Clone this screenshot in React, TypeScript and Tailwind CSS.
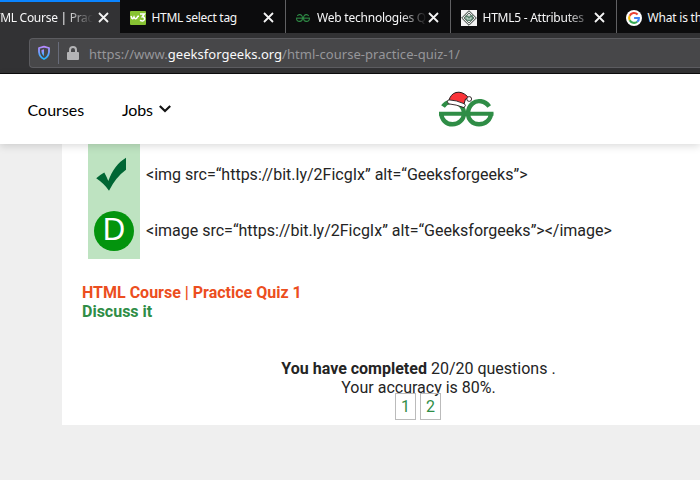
import React from "react";

const uiFont = "font-['Noto_Sans','Open_Sans',sans-serif]";

function CloseIcon() {
  return (
    <svg width="11" height="11" viewBox="0 0 11 11" className="block shrink-0" fill="none" stroke="#f4f4f4" strokeWidth="1.8">
      <path d="M1 1 L10 10 M10 1 L1 10" />
    </svg>
  );
}

function W3Icon() {
  return (
    <svg width="16" height="14" viewBox="0 0 16 14" className="block">
      <rect width="16" height="14" rx="1" fill="#87c232" />
      <path d="M1 5 L2 7.5 Q3 8.3 4 6 Q5 8.5 6.5 7.5 L8 5.2 H9" fill="none" stroke="#fff" strokeWidth="1.5" />
      <path d="M10 3 H14.3 L12.3 5.8 Q15 6 14.4 8.5 Q13.3 11 10 9.3" fill="none" stroke="#fff" strokeWidth="1.6" />
    </svg>
  );
}

function GfgMark({ width, height, color }: { width: number; height: number; color: string }) {
  return (
    <svg width={width} height={height} viewBox="0 0 55 28" preserveAspectRatio="none" className="block" fill="none" stroke={color} strokeWidth="4">
      <path d="M5 6.5 C10 0.5 18 1 22 5 C25 8 25.5 11 25.5 15 C25.5 21 20.5 25.8 14 25.8 C7 25.8 2.2 21 2.2 14.5" />
      <path d="M50 6.5 C45 0.5 37 1 33 5 C30 8 29.5 11 29.5 15 C29.5 21 34.5 25.8 41 25.8 C48 25.8 52.8 21 52.8 14.5" />
      <path d="M0 14.5 H55" strokeWidth="3.8" />
    </svg>
  );
}

function DiamondIcon() {
  return (
    <svg width="16" height="16" viewBox="0 0 16 16" className="block">
      <rect width="16" height="16" fill="#f4f4f4" />
      <path d="M8 .7 L15.3 8 L8 15.3 L.7 8Z" fill="#e4e8e5" stroke="#333a36" strokeWidth="1" />
      <path d="M8 3 L13 8 L8 13 L3 8Z" fill="none" stroke="#555c58" strokeWidth=".9" />
      <path d="M4.3 5.5 H7.2 L8 7 L9 5.3 H12 V9.5 L9.5 11 H6.5 L4.3 9Z" fill="#58816c" />
      <path d="M6 7 V9 H10 V7" fill="none" stroke="#d9eadf" />
    </svg>
  );
}

function GoogleIcon() {
  return (
    <svg width="16" height="16" viewBox="0 0 16 16" className="block">
      <circle cx="8" cy="8" r="8" fill="#fff" />
      <g fill="none" strokeWidth="2.1">
        <path d="M11.6 4.5 A4.9 4.9 0 0 0 3.7 5.7" stroke="#ea4335" />
        <path d="M3.7 5.7 A4.9 4.9 0 0 0 3.7 10.3" stroke="#fbbc05" />
        <path d="M3.7 10.3 A4.9 4.9 0 0 0 11.2 11.7" stroke="#34a853" />
        <path d="M11.2 11.7 Q13.1 10.2 12.9 8 H8.1" stroke="#4285f4" />
      </g>
    </svg>
  );
}

function Tab({ icon, label, labelClass, tracking }: { icon: React.ReactNode; label: string; labelClass: string; tracking: string }) {
  return (
    <div className="flex h-[33px] w-[165.5px] shrink-0 items-center border-r border-[#616163] pt-0.5">
      <div className="ml-[9.5px] flex w-4 shrink-0 justify-center">{icon}</div>
      <div className={`ml-[6px] w-[110px] overflow-hidden whitespace-nowrap ${labelClass} ${tracking}`}>{label}</div>
      <div className="ml-px"><CloseIcon /></div>
    </div>
  );
}

const fade = "[mask-image:linear-gradient(to_right,black_76%,transparent_100%)]";

function Browser() {
  return (
    <div className={`${uiFont} text-[12px] leading-4 text-[#f7f7f8]`}>
      <div className="flex h-[33px] bg-[#0c0c0d]">
        <div className="flex h-[33px] w-[120px] shrink-0 items-center border-t-2 border-[#0a84ff] bg-[#323234]">
          <div className="flex w-[93px] shrink-0 justify-end overflow-hidden whitespace-nowrap tracking-[-0.28px] [mask-image:linear-gradient(to_right,black_70%,transparent_100%)]">
            <span>HTML Course | Prac</span>
          </div>
          <div className="ml-[5px]"><CloseIcon /></div>
        </div>
        <Tab icon={<W3Icon />} label="HTML select tag" labelClass="" tracking="tracking-[-0.3px]" />
        <Tab icon={<GfgMark width={14} height={8} color="#2f8d46" />} label="Web technologies Q" labelClass={fade} tracking="tracking-[-0.22px]" />
        <Tab icon={<DiamondIcon />} label="HTML5 - Attributes" labelClass={fade} tracking="tracking-[-0.25px]" />
        <div className="flex shrink-0 items-center pl-[9px] pt-0.5">
          <GoogleIcon />
          <span className="ml-[6px] whitespace-nowrap tracking-[-0.2px]">What is th</span>
        </div>
      </div>
      <div className="h-[41px] border-b border-[#0c0c0d] bg-[#323234] pl-[29px] pt-[5px]">
        <div className="flex h-[30px] items-center rounded-l-sm border border-r-0 border-[#5c5c60] bg-[#474749]">
          <svg width="14" height="16" viewBox="0 0 14 16" className="ml-[7px] block shrink-0">
            <defs>
              <linearGradient id="shield" x1="0" y1="0" x2="0" y2="1">
                <stop offset="0" stopColor="#b889ff" />
                <stop offset="1" stopColor="#23b5ff" />
              </linearGradient>
            </defs>
            <path d="M7 1.6 L12 3 V7 Q11.5 12 7 14 Q2.5 12 2 7 V3Z" fill="none" stroke="url(#shield)" strokeWidth="1.8" strokeLinejoin="round" />
            <path d="M7 4.3 V11.2 Q4.6 9.5 4.5 7 V5Z" fill="url(#shield)" />
          </svg>
          <div className="ml-[7px] h-[22px] w-px bg-[#686c7a]" />
          <svg width="12" height="14" viewBox="0 0 12 14" className="ml-2 block shrink-0">
            <path d="M3 7 V4 A3 3 0 0 1 9 4 V7" fill="none" stroke="#b4b4b6" strokeWidth="2" />
            <rect y="6" width="12" height="8" rx="1" fill="#b4b4b6" />
          </svg>
          <span className="ml-[10px] mt-0.5 whitespace-nowrap text-[13px] tracking-[0.03px] text-[#96969a]">
            https://www.<span className="text-[#f9f9fa]">geeksforgeeks.org</span>/html-course-practice-quiz-1/
          </span>
        </div>
      </div>
    </div>
  );
}

function Logo() {
  return (
    <svg width="57" height="37" viewBox="0 0 57 37" className="block">
      <g fill="none" stroke="#2f8d46" strokeWidth="4.4">
        <path d="M5 15.5 C8 10.5 16 9 21 12.5 C24.5 15.5 26 19 26 22.5 C26 28.5 20.5 33.3 14.5 33.3 C8 33.3 3.3 28.5 3.3 22" />
        <path d="M51.2 15.5 C47 9.5 39 8.5 34.5 12.5 C31 15.5 30 19 30 22.5 C30 28.5 34.5 33.3 41 33.3 C47.5 33.3 53 28.5 53 22" />
        <path d="M1 22.8 H55.5" strokeWidth="4" />
      </g>
      <path d="M10.8 10 Q12.5 3 18 1.5 Q24 0 29.5 5.5 L31 7 L27.5 8 L26 13Z" fill="#fa3338" stroke="#25191b" strokeWidth="1" />
      <path d="M10.5 8.8 Q18 9 26.5 12.8 Q28.5 14.5 26 16.6 Q18 13.5 10.5 12.8 Q8.2 10.5 10.5 8.8Z" fill="#fff" stroke="#25191b" strokeWidth=".9" />
      <circle cx="31.2" cy="8" r="2.4" fill="#fff" stroke="#25191b" strokeWidth=".9" />
    </svg>
  );
}

function Header() {
  return (
    <header className="relative z-10 grid h-[70px] grid-cols-[122px_316px_1fr] items-center bg-white font-[Lato,sans-serif] text-[16px] leading-5 text-black shadow-[0_2px_8px_rgba(0,0,0,0.15)]">
      <span className="ml-[27.5px] mt-[2px] font-normal tracking-[0.02px]">Courses</span>
      <div className="mt-[2px] flex items-center">
        <span className="w-[30.5px] tracking-[-0.15px]">Jobs</span>
        <svg width="12" height="8" viewBox="0 0 12 8" className="-mt-0.5 ml-[6.5px] block" fill="none" stroke="#151515" strokeWidth="2.2">
          <path d="M.8 1 L6 6 L11.2 1" />
        </svg>
      </div>
      <div className="mt-px"><Logo /></div>
    </header>
  );
}

function Quiz() {
  return (
    <main className="ml-[62px] h-[281px] bg-white font-[Roboto,sans-serif] text-[16px] leading-[19px] text-[#242424]">
      <div className="ml-[26px] grid h-[115px] grid-cols-[52px_1fr] grid-rows-[60px_55px]">
        <div className="bg-[#bee3c1] pl-2 pt-[13px]">
          <svg width="31" height="34" viewBox="0 0 31 34" className="block">
            <path d="M.2 21.3 Q4 17.8 8.3 15.5 Q10.5 19.5 12.3 24 C16.5 13 22 5.5 30 .8 V12.8 Q20 20 13 33.7 Q8 26.5 .2 21.3Z" fill="#006634" />
          </svg>
        </div>
        <div className="pl-[6px] pt-[21px] whitespace-nowrap">&lt;img src=“https://bit.ly/2FicgIx” alt=“Geeksforgeeks”&gt;</div>
        <div className="bg-[#bee3c1] pl-[6px] pt-[7px]">
          <div className="flex size-10 items-center justify-center rounded-full bg-[#03940d] pb-0.5 font-['Liberation_Sans',sans-serif] text-[31px] leading-9 text-white">D</div>
        </div>
        <div className="pl-[6px] pt-[17px] whitespace-nowrap">&lt;image src=“https://bit.ly/2FicgIx” alt=“Geeksforgeeks”&gt;&lt;/image&gt;</div>
      </div>
      <div className="ml-5 mt-6 font-bold">
        <div className="text-[#ec4e20]">HTML Course | Practice Quiz 1</div>
        <div className="text-[#2f8d46]">Discuss it</div>
      </div>
      <div className="mt-[38px] w-[713px] text-center">
        <div><b>You have completed</b> 20/20 questions .</div>
        <div>Your accuracy is 80%.</div>
        <div className="-mt-1 flex justify-center gap-1 pr-px text-[#2f8d46]">
          <span className="flex h-[27px] w-[21px] items-center justify-center border border-[#bbb]">1</span>
          <span className="flex h-[27px] w-[21px] items-center justify-center border border-[#bbb]">2</span>
        </div>
      </div>
    </main>
  );
}

export default function App() {
  return (
    <div className="h-[480px] w-[700px] overflow-hidden bg-[#efefef]">
      <Browser />
      <Header />
      <Quiz />
    </div>
  );
}
